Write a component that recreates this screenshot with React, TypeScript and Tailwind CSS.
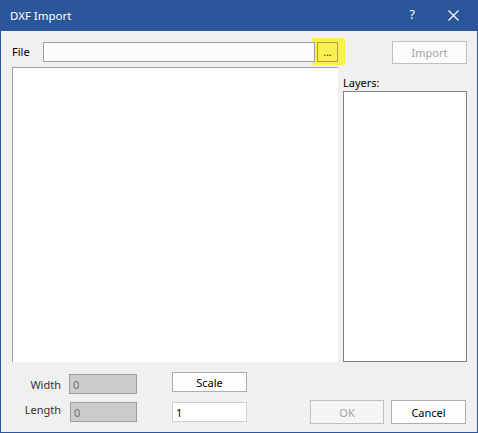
export default function App() {
  return (
    <div className="w-[478px] h-[433px] flex flex-col bg-[#f0f0f0] border-x border-b border-[#2b579a] font-['Noto_Sans',sans-serif] text-[11px] text-black leading-none overflow-hidden">
      {/* title bar */}
      <div className="h-[31px] shrink-0 bg-[#2b579a] flex items-center text-white">
        <span className="ml-[9px] text-[11.5px]">DXF Import</span>
        <span className="ml-auto mr-[33px] text-[12.5px]">?</span>
        <svg width="11" height="11" viewBox="0 0 11 11" className="mr-[18px]">
          <path d="M0.5 0.5 L10.5 10.5 M10.5 0.5 L0.5 10.5" stroke="white" strokeWidth="1.2" />
        </svg>
      </div>

      <div className="flex flex-col pl-[11px]">
        {/* file row */}
        <div className="flex items-center mt-[7px] h-[27px]">
          <span className="w-[31px]">File</span>
          <div className="relative z-10 w-[272px] h-[20px] bg-[#fcfcfc] border border-[#a0a0a0]" />
          <div className="ml-[-3px] h-[27px] pl-[5px] pr-[7px] pt-[4px] pb-[3px] bg-[#fbf04f]">
            <div className="w-[21px] h-[20px] border border-[#a8a24a] bg-[#f9ef50] flex items-end justify-center pb-[4px] text-[10px] text-[#333]">
              ...
            </div>
          </div>
          <button className="ml-[47px] self-end mb-[1px] w-[75px] h-[23px] bg-[#fbfbfb] border border-[#c0c0c0] text-[#a3a3a3]">
            Import
          </button>
        </div>

        {/* main panels */}
        <div className="flex mt-[2px] h-[295px]">
          <div className="w-[326px] bg-white border-l border-t border-[#a0a0a0]" />
          <div className="ml-[5px] w-[124px] flex flex-col">
            <span className="mt-[10px] h-[14px]">Layers:</span>
            <div className="flex-1 bg-white border border-[#828282]" />
          </div>
        </div>

        {/* width row */}
        <div className="flex items-start mt-[10px] h-[22px]">
          <span className="w-[49px] mt-[7px] text-right text-[#333]">Width</span>
          <div className="ml-[8px] mt-[2px] w-[68px] h-[20px] bg-[#cccccc] border border-[#9e9e9e] text-[#6d6d6d] pl-[3px] pt-[4px]">
            0
          </div>
          <button className="ml-[35px] w-[75px] h-[20px] bg-[#fdfdfd] border border-[#adadad] text-black">
            Scale
          </button>
        </div>

        {/* length row */}
        <div className="flex items-start mt-[6px] h-[24px]">
          <span className="w-[49px] mt-[4px] text-right text-[#333]">Length</span>
          <div className="ml-[9px] mt-[2px] w-[67px] h-[20px] bg-[#cccccc] border border-[#9e9e9e] text-[#6d6d6d] pl-[3px] pt-[4px]">
            0
          </div>
          <div className="ml-[35px] mt-[2px] w-[75px] h-[20px] bg-white border border-[#cfcfcf] pl-[3px] pt-[4px]">
            1
          </div>
          <button className="ml-[63px] w-[74px] h-[24px] bg-[#f5f5f5] border border-[#c0c0c0] text-[#a3a3a3]">
            OK
          </button>
          <button className="ml-[7px] w-[75px] h-[24px] bg-[#fdfdfd] border border-[#adadad] text-black">
            Cancel
          </button>
        </div>
      </div>
    </div>
  );
}
